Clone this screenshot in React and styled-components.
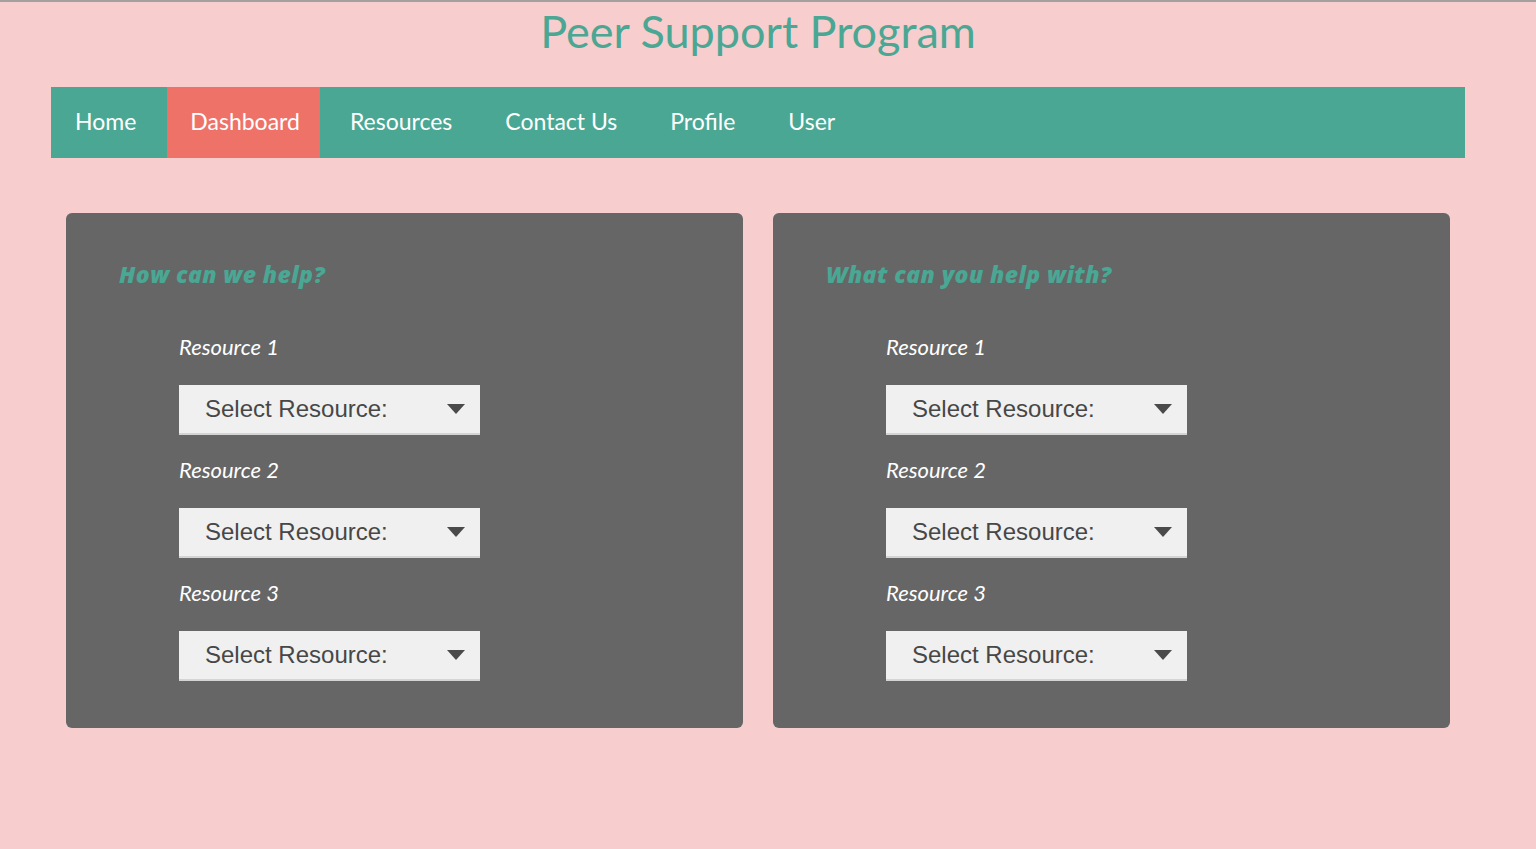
import React from "react";
import styled, { createGlobalStyle } from "styled-components";

const GlobalStyle = createGlobalStyle`
  html, body {
    margin: 0;
    padding: 0;
    background: #f7cdcd;
  }
  body {
    font-family: Lato, "Open Sans", sans-serif;
  }
`;

const Page = styled.div`
  min-height: 849px;
  border-top: 2px solid #a3a0a0;
  box-sizing: border-box;
`;

const Content = styled.div`
  width: 1516px;
`;

const Title = styled.h1`
  margin: 0;
  padding-top: 2px;
  height: 83px;
  text-align: center;
  font-size: 45px;
  font-weight: 400;
  line-height: 54px;
  color: #4aa794;
`;

const Nav = styled.nav`
  display: flex;
  margin: 0 51px;
  height: 71px;
  background: #4aa794;
`;

const NavItem = styled.a`
  display: flex;
  align-items: center;
  margin-right: ${(p) => (p.$active ? 4 : 0)}px;
  padding: ${(p) => (p.$active ? "0 20px 3px 23px" : "0 27px 3px 26px")};
  font-size: 23px;
  color: #fff;
  text-decoration: none;
  background: ${(p) => (p.$active ? "#ef7268" : "transparent")};
  cursor: pointer;
  &:first-child {
    padding-left: 24px;
    padding-right: 31px;
  }
`;

const Cards = styled.div`
  display: grid;
  grid-template-columns: 677px 677px;
  gap: 30px;
  margin: 55px 0 0 66px;
`;

const Card = styled.section`
  background: #666666;
  border-radius: 6px;
  height: 515px;
  box-sizing: border-box;
  padding: 47px 0 0 53px;
`;

const Heading = styled.h2`
  margin: 0 0 45px;
  font-family: "Open Sans", Lato, sans-serif;
  font-size: 23px;
  font-weight: 800;
  font-style: italic;
  line-height: 28px;
  letter-spacing: 0.4px;
  color: #4aa794;
`;

const Field = styled.div`
  display: flex;
  flex-direction: column;
  padding-left: 60px;
  margin-bottom: 21px;
`;

const Label = styled.label`
  font-size: 22px;
  font-style: italic;
  line-height: 28px;
  color: #fff;
  margin-bottom: 24px;
`;

const Select = styled.div`
  display: flex;
  align-items: center;
  justify-content: space-between;
  width: 301px;
  height: 50px;
  box-sizing: border-box;
  padding: 0 15px 0 26px;
  background: #f0f0f0;
  border-bottom: 2px solid #d4d4d4;
  font-family: "Liberation Sans", Arial, sans-serif;
  font-size: 24px;
  color: #474747;
  cursor: pointer;
`;

const Arrow = () => (
  <svg width="18" height="10" viewBox="0 0 18 10">
    <path d="M0 0 L18 0 L9 10 Z" fill="#4a4a4a" />
  </svg>
);

const navLinks = ["Home", "Dashboard", "Resources", "Contact Us", "Profile", "User"];

const panels = ["How can we help?", "What can you help with?"];

const ResourceCard = ({ title }) => (
  <Card>
    <Heading>{title}</Heading>
    {[1, 2, 3].map((n) => (
      <Field key={n}>
        <Label>Resource {n}</Label>
        <Select>
          <span>Select Resource:</span>
          <Arrow />
        </Select>
      </Field>
    ))}
  </Card>
);

export default function App() {
  return (
    <Page>
      <GlobalStyle />
      <Content>
        <Title>Peer Support Program</Title>
        <Nav>
          {navLinks.map((l) => (
            <NavItem key={l} $active={l === "Dashboard"}>
              {l}
            </NavItem>
          ))}
        </Nav>
        <Cards>
          {panels.map((t) => (
            <ResourceCard key={t} title={t} />
          ))}
        </Cards>
      </Content>
    </Page>
  );
}
